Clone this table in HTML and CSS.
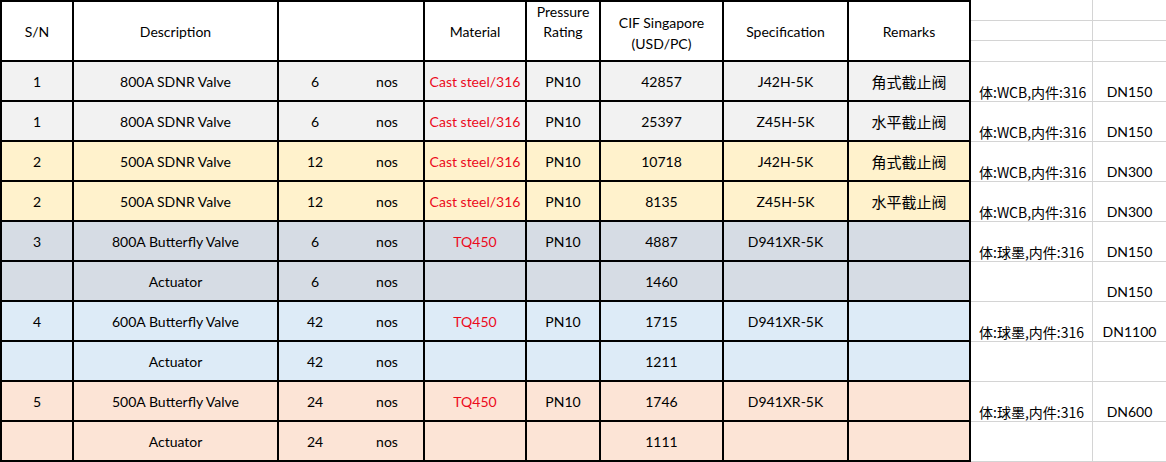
FILE: index.html
```html
<!DOCTYPE html>
<html>
<head>
<meta charset="utf-8">
<link rel="stylesheet" href="styles.css">
</head>
<body>
<div class="sheet">
  <div class="table">
    <div class="row head">
      <div class="cell">S/N</div>
      <div class="cell">Description</div>
      <div class="cell"></div>
      <div class="cell">Material</div>
      <div class="cell top"><span>Pressure<br>Rating</span></div>
      <div class="cell two"><span>CIF Singapore<br>(USD/PC)</span></div>
      <div class="cell">Specification</div>
      <div class="cell">Remarks</div>
    </div>

    <div class="row gray">
      <div class="cell">1</div>
      <div class="cell">800A SDNR Valve</div>
      <div class="cell qty"><span>6</span><span>nos</span></div>
      <div class="cell red">Cast steel/316</div>
      <div class="cell">PN10</div>
      <div class="cell">42857</div>
      <div class="cell">J42H-5K</div>
      <div class="cell cjk">角式截止阀</div>
    </div>
    <div class="row gray">
      <div class="cell">1</div>
      <div class="cell">800A SDNR Valve</div>
      <div class="cell qty"><span>6</span><span>nos</span></div>
      <div class="cell red">Cast steel/316</div>
      <div class="cell">PN10</div>
      <div class="cell">25397</div>
      <div class="cell">Z45H-5K</div>
      <div class="cell cjk">水平截止阀</div>
    </div>
    <div class="row yellow">
      <div class="cell">2</div>
      <div class="cell">500A SDNR Valve</div>
      <div class="cell qty"><span>12</span><span>nos</span></div>
      <div class="cell red">Cast steel/316</div>
      <div class="cell">PN10</div>
      <div class="cell">10718</div>
      <div class="cell">J42H-5K</div>
      <div class="cell cjk">角式截止阀</div>
    </div>
    <div class="row yellow">
      <div class="cell">2</div>
      <div class="cell">500A SDNR Valve</div>
      <div class="cell qty"><span>12</span><span>nos</span></div>
      <div class="cell red">Cast steel/316</div>
      <div class="cell">PN10</div>
      <div class="cell">8135</div>
      <div class="cell">Z45H-5K</div>
      <div class="cell cjk">水平截止阀</div>
    </div>
    <div class="row slate">
      <div class="cell">3</div>
      <div class="cell">800A Butterfly Valve</div>
      <div class="cell qty"><span>6</span><span>nos</span></div>
      <div class="cell red">TQ450</div>
      <div class="cell">PN10</div>
      <div class="cell">4887</div>
      <div class="cell">D941XR-5K</div>
      <div class="cell"></div>
    </div>
    <div class="row slate">
      <div class="cell"></div>
      <div class="cell">Actuator</div>
      <div class="cell qty"><span>6</span><span>nos</span></div>
      <div class="cell"></div>
      <div class="cell"></div>
      <div class="cell">1460</div>
      <div class="cell"></div>
      <div class="cell"></div>
    </div>
    <div class="row blue">
      <div class="cell">4</div>
      <div class="cell">600A Butterfly Valve</div>
      <div class="cell qty"><span>42</span><span>nos</span></div>
      <div class="cell red">TQ450</div>
      <div class="cell">PN10</div>
      <div class="cell">1715</div>
      <div class="cell">D941XR-5K</div>
      <div class="cell"></div>
    </div>
    <div class="row blue">
      <div class="cell"></div>
      <div class="cell">Actuator</div>
      <div class="cell qty"><span>42</span><span>nos</span></div>
      <div class="cell"></div>
      <div class="cell"></div>
      <div class="cell">1211</div>
      <div class="cell"></div>
      <div class="cell"></div>
    </div>
    <div class="row peach">
      <div class="cell">5</div>
      <div class="cell">500A Butterfly Valve</div>
      <div class="cell qty"><span>24</span><span>nos</span></div>
      <div class="cell red">TQ450</div>
      <div class="cell">PN10</div>
      <div class="cell">1746</div>
      <div class="cell">D941XR-5K</div>
      <div class="cell"></div>
    </div>
    <div class="row peach">
      <div class="cell"></div>
      <div class="cell">Actuator</div>
      <div class="cell qty"><span>24</span><span>nos</span></div>
      <div class="cell"></div>
      <div class="cell"></div>
      <div class="cell">1111</div>
      <div class="cell"></div>
      <div class="cell"></div>
    </div>
  </div>

  <div class="side">
    <div class="sc h1"></div><div class="sc h1 r"></div>
    <div class="sc h2"></div><div class="sc h2 r"></div>
    <div class="sc h3"></div><div class="sc h3 r"></div>

    <div class="sc">体:WCB,内件:316</div><div class="sc r">DN150</div>
    <div class="sc">体:WCB,内件:316</div><div class="sc r">DN150</div>
    <div class="sc">体:WCB,内件:316</div><div class="sc r">DN300</div>
    <div class="sc">体:WCB,内件:316</div><div class="sc r">DN300</div>
    <div class="sc">体:球墨,内件:316</div><div class="sc r">DN150</div>
    <div class="sc"></div><div class="sc r">DN150</div>
    <div class="sc">体:球墨,内件:316</div><div class="sc r">DN1100</div>
    <div class="sc"></div><div class="sc r"></div>
    <div class="sc">体:球墨,内件:316</div><div class="sc r">DN600</div>
    <div class="sc"></div><div class="sc r"></div>
  </div>
</div>
</body>
</html>
```

FILE: styles.css
```css
html, body {
  margin: 0;
  padding: 0;
  background: #fff;
}

body {
  font-family: Lato, "Noto Sans CJK SC", sans-serif;
  font-size: 14px;
  color: #000;
}

.sheet {
  display: flex;
  width: 1166px;
  height: 462px;
  overflow: hidden;
}

.table {
  display: grid;
  grid-template-columns: 70px 203px 144px 100px 72px 121px 123px 120px;
  grid-template-rows: 58px repeat(10, 38px);
  gap: 2px;
  padding: 2px;
  background: #000;
  flex: none;
}

.row {
  display: contents;
}

.cell {
  display: flex;
  align-items: center;
  justify-content: center;
  text-align: center;
  background: #fff;
  line-height: 20px;
  padding-top: 2px;
  white-space: nowrap;
}

.head .cell {
  padding-top: 1px;
}

.head .top {
  align-items: flex-start;
  padding-top: 0;
}

.head .two {
  line-height: 21px;
  padding-top: 3px;
}

.gray .cell { background: #f2f2f2; }
.yellow .cell { background: #fff2cc; }
.slate .cell { background: #d6dce4; }
.blue .cell { background: #ddebf7; }
.peach .cell { background: #fce4d6; }

.red {
  color: #ec0a1c;
}

.cjk {
  font-family: "Noto Sans CJK SC", sans-serif;
  font-size: 15px;
}

.qty {
  justify-content: stretch;
}

.qty span {
  flex: 1;
  text-align: center;
}

.side {
  flex: 1;
  display: grid;
  grid-template-columns: 122px 73px;
  grid-template-rows: 21px 20px 21px repeat(10, 40px);
}

.sc {
  border-bottom: 1px solid #d4d4d4;
  border-right: 1px solid #d4d4d4;
  display: flex;
  align-items: flex-end;
  padding-left: 8px;
  line-height: 18px;
  font-family: "Noto Sans CJK SC", Lato, sans-serif;
  font-size: 14px;
  white-space: nowrap;
}

.sc.r {
  border-right: none;
  padding-left: 0;
  justify-content: center;
  font-family: Lato, sans-serif;
}
```
